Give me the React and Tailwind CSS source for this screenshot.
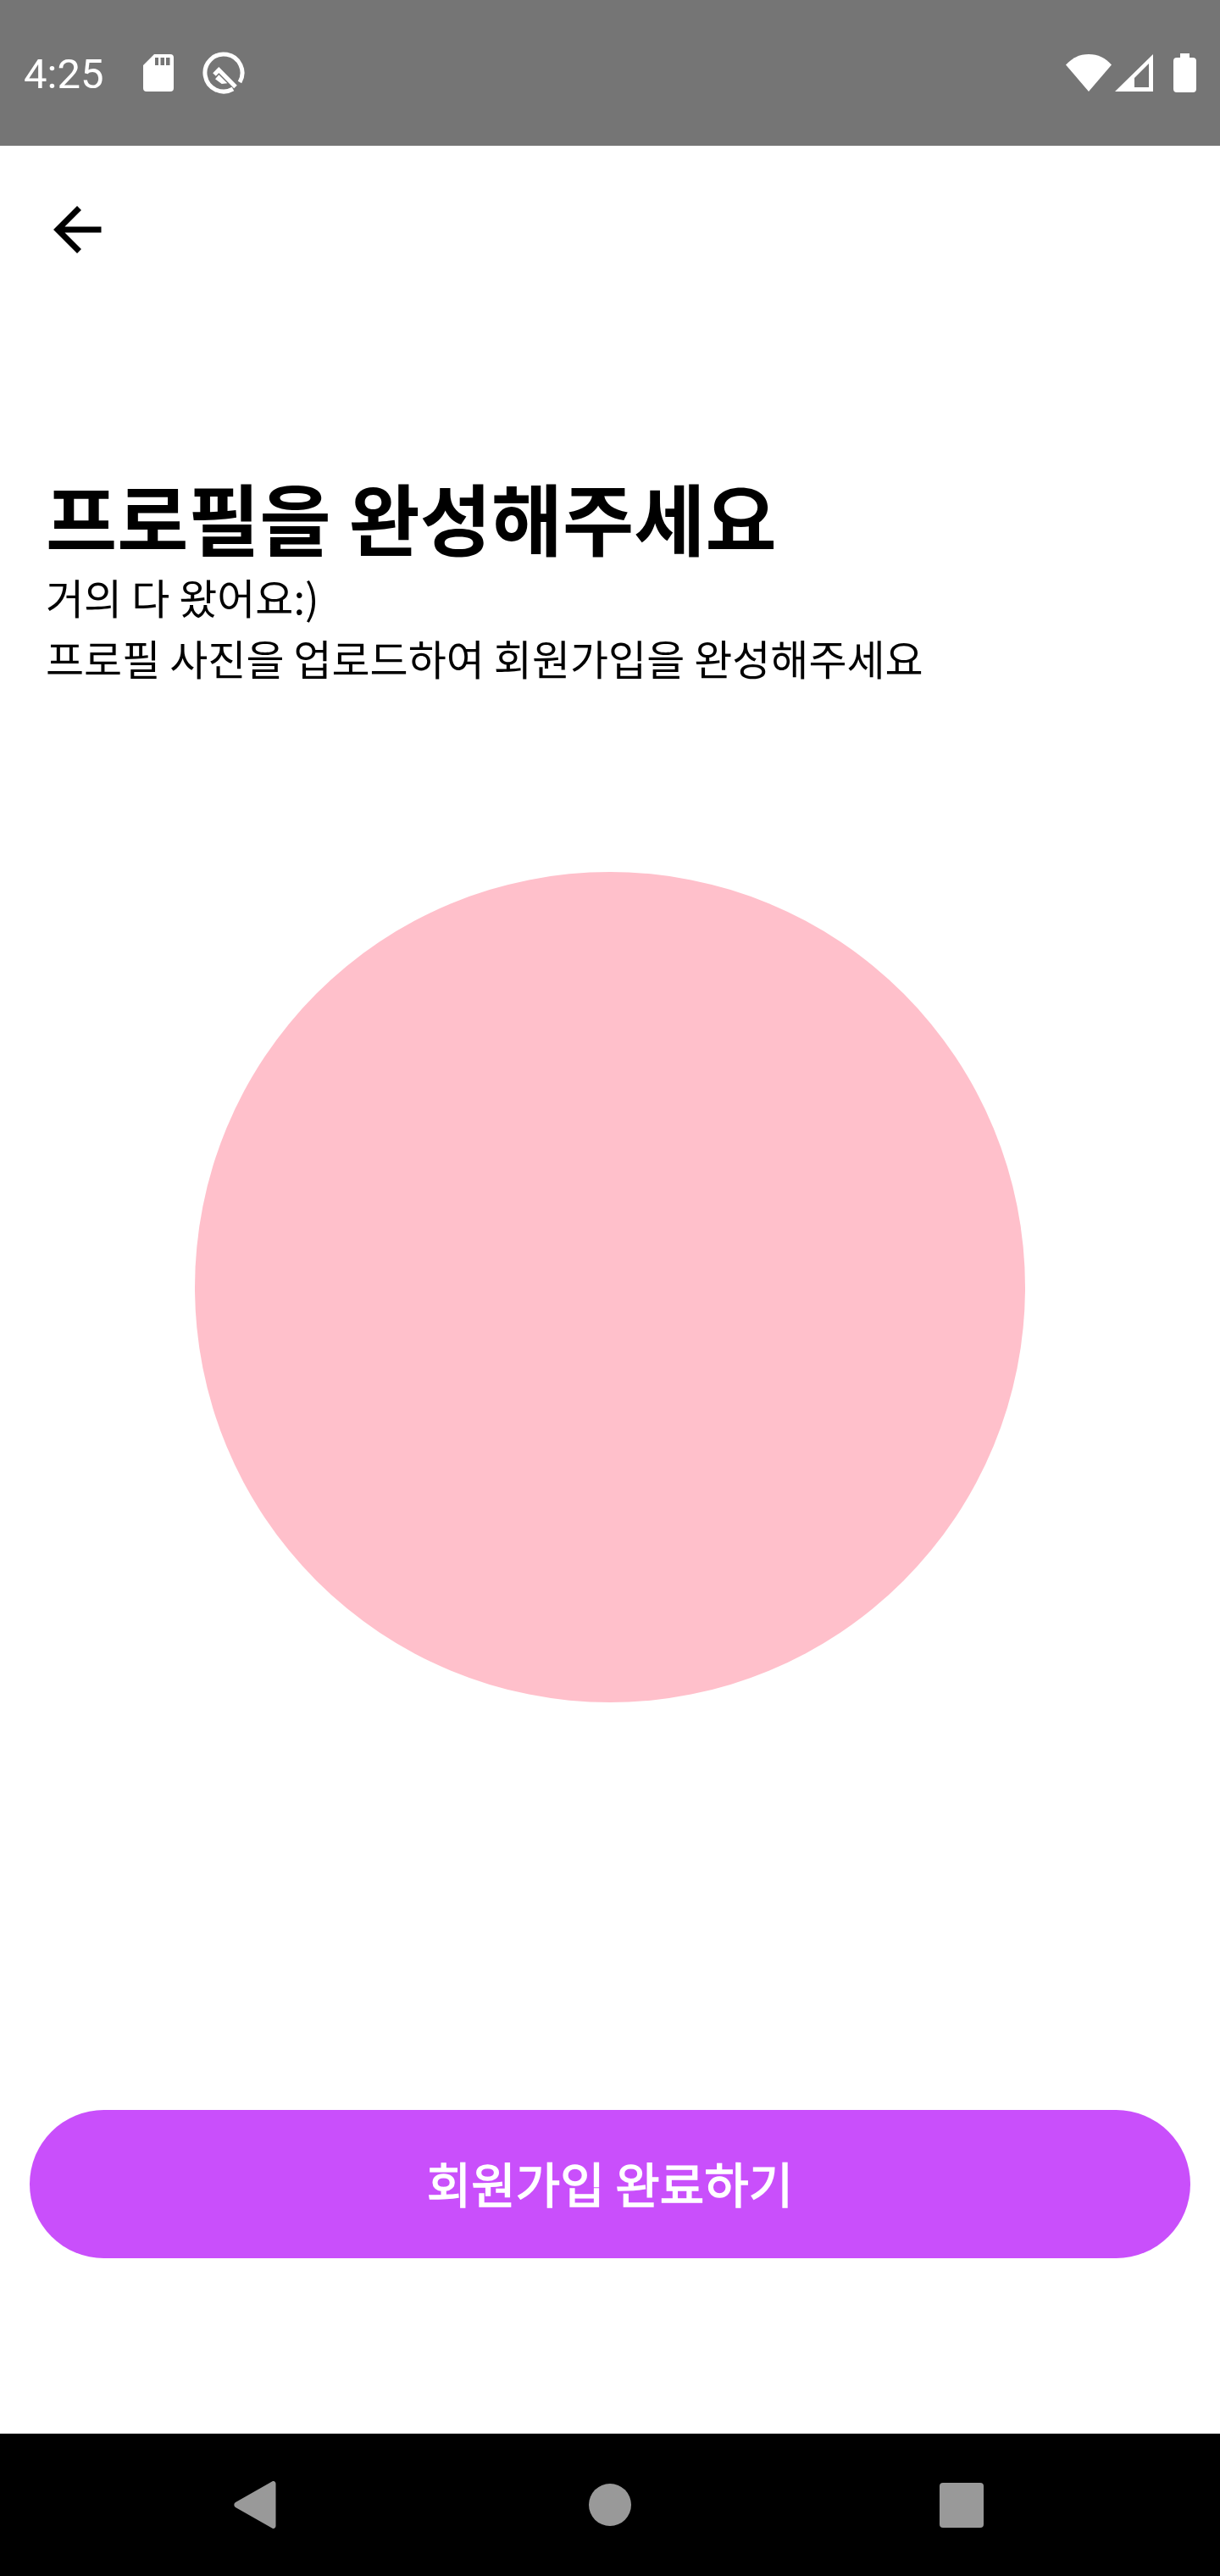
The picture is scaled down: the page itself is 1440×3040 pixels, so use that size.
const KR = "font-['Noto_Sans_CJK_KR','Noto_Sans',sans-serif]";

function SdCard() {
  return (
    <svg width="36" height="44" viewBox="0 0 36 44" fill="white">
      <path fillRule="evenodd" d="M13 0H32a4 4 0 0 1 4 4V40a4 4 0 0 1-4 4H4a4 4 0 0 1-4-4V13ZM14 4v9h4V4ZM20.500 4v9h4.500V4ZM27 4v9h4.500V4Z" />
    </svg>
  );
}

function QLogo() {
  return (
    <svg width="50" height="50" viewBox="0 0 50 50" fill="none">
      <path d="M36 44A22 22 0 1 1 44 36" stroke="white" strokeWidth="5" />
      <path d="M14 27 19.300 21.500 39 41.500" stroke="white" strokeWidth="5" />
      <path d="M15 32.300 19.300 27.300 29.300 37.300 22.700 38Z" fill="white" />
    </svg>
  );
}

function StatusIcons() {
  return (
    <div className="flex items-center">
      <svg width="54" height="44" viewBox="0 0 54 44" fill="white">
        <path d="M0 12.500C7 4.500 16 0 27 0s20 4.500 27 12.500L27 44Z" />
      </svg>
      <svg className="ml-[4px]" width="45" height="44" viewBox="0 0 45 44" fill="white">
        <path fillRule="evenodd" d="M45 0V44H0ZM40 11 23 28V39H40Z" />
      </svg>
      <svg className="ml-[24px]" width="27" height="46" viewBox="0 0 27 46" fill="white">
        <path d="M8 0H19V5H23a4 4 0 0 1 4 4V42a4 4 0 0 1-4 4H4a4 4 0 0 1-4-4V9a4 4 0 0 1 4-4H8Z" />
      </svg>
    </div>
  );
}

export default function App() {
  return (
    <div className="flex flex-col w-[1440px] h-[3040px] bg-white overflow-hidden">
      <div className="flex items-center justify-between h-[172px] shrink-0 bg-[#757575] pl-[28px] pr-[28px]">
        <div className="flex items-center">
          <span className="font-['Roboto',sans-serif] text-[49px] text-white w-[141px] pt-[3px]">4:25</span>
          <SdCard />
          <div className="ml-[34px]">
            <QLogo />
          </div>
        </div>
        <StatusIcons />
      </div>

      <div className="flex flex-col flex-1 min-h-0">
        <button className="ml-[63px] mt-[71px] w-[58px] h-[56px]">
          <svg width="58" height="56" viewBox="0 0 58 56" fill="none" stroke="black" strokeWidth="7">
            <path d="M30.500 2.500 5 28 30.500 53.500M5 28H56.500" />
          </svg>
        </button>

        <div className={`${KR} text-black ml-[54px] mt-[258px]`}>
          <h1 className="font-bold text-[91.500px] leading-[104px]">프로필을 완성해주세요</h1>
          <p className="text-[49px] leading-[70px] mt-[8px]">거의 다 왔어요:)</p>
          <p className="text-[49px] leading-[70px] mt-[2px]">프로필 사진을 업로드하여 회원가입을 완성해주세요</p>
        </div>

        <div className="w-[980px] h-[980px] rounded-full bg-[#ffc0cb] mx-auto mt-[218px] shrink-0" />

        <button className={`${KR} mt-[481px] mx-[35px] h-[175px] pb-[3px] shrink-0 rounded-[88px] bg-[#c94ffb] text-white text-[57px] [-webkit-text-stroke:1.5px_white]`}>
          회원가입 완료하기
        </button>
      </div>

      <div className="flex items-center h-[168px] shrink-0 bg-black">
        <div className="ml-[276px]">
          <svg width="50" height="56" viewBox="0 0 50 56" fill="#999999" className="block">
            <path d="M46 0a3 3 0 0 1 3.500 3V53a3 3 0 0 1-3.500 3L2 31a3.500 3.500 0 0 1 0-6Z" />
          </svg>
        </div>
        <div className="w-[50px] h-[50px] rounded-full bg-[#999999] ml-[369px]" />
        <div className="w-[52px] h-[53px] rounded-[4px] bg-[#999999] ml-[364px]" />
      </div>
    </div>
  );
}
